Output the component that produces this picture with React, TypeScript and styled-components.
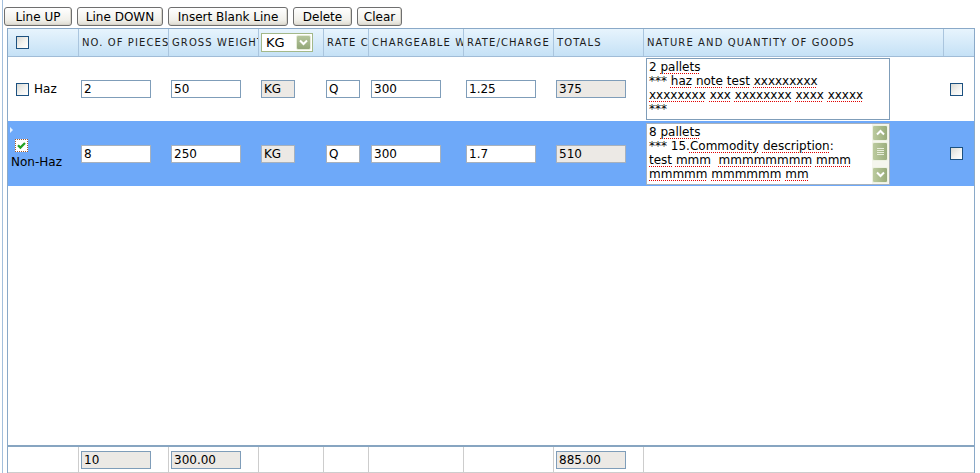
import React from 'react';
import styled, { createGlobalStyle } from 'styled-components';

const GlobalStyle = createGlobalStyle`
  html, body {
    margin: 0;
    padding: 0;
    background: #fff;
  }
  body {
    font-family: "DejaVu Sans", Verdana, sans-serif;
    font-size: 12px;
    color: #000;
  }
  * {
    box-sizing: border-box;
  }
`;

const COLS = '71px 90px 90px 65px 45px 95px 90px 90px 300px 30px';
const FOOT_COLS = '71px 90px 90px 65px 45px 95px 90px 90px 330px';

const Frame = styled.div`
  margin-left: 2px;
  border-left: 1px solid #a3bfdc;
  height: 473px;
  overflow: hidden;
`;

const Toolbar = styled.div`
  display: flex;
  gap: 5px;
  height: 28px;
  padding: 7px 0 0 1px;
`;

const Button = styled.button<{ $w: number }>`
  width: ${p => p.$w}px;
  height: 19px;
  padding: 0;
  border: 1px solid #6f6f6f;
  border-radius: 3px;
  background: linear-gradient(#ffffff, #f1f0ea 70%, #dedbd1);
  box-shadow: inset -1px -1px 0 #d8d5cb;
  font-family: "DejaVu Sans", Verdana, sans-serif;
  font-size: 12px;
  color: #000;
`;

const Grid = styled.div`
  margin-left: 4px;
  width: 968px;
  height: 445px;
  border: 1px solid #8aa9c8;
  border-bottom: none;
  display: flex;
  flex-direction: column;
`;

const HeadRow = styled.div`
  display: grid;
  grid-template-columns: ${COLS};
  height: 28px;
  flex-shrink: 0;
  border-bottom: 1px solid #a0bcd7;
  background: linear-gradient(#e7f4fd, #c5e1f6);
`;

const HeadCell = styled.div<{ $pad?: number }>`
  display: flex;
  align-items: center;
  padding-left: ${p => p.$pad ?? 3}px;
  border-right: 1px solid #aac5de;
  overflow: hidden;
  white-space: nowrap;
  font-size: 10px;
  letter-spacing: 1.1px;
  color: #1c1c1c;

  &:last-child {
    border-right: none;
  }
`;

const Body = styled.div`
  flex: 1;
  background: #fff;
`;

const Row = styled.div<{ $sel?: boolean; $h: number }>`
  display: grid;
  grid-template-columns: ${COLS};
  height: ${p => p.$h}px;
  background: ${p => (p.$sel ? '#6ea9f9' : '#fff')};
`;

const Cell = styled.div<{ $pad?: number }>`
  display: flex;
  align-items: center;
  min-width: 0;
  padding-left: ${p => p.$pad ?? 2}px;
`;

const LeadCell = styled.div`
  position: relative;
  display: flex;
  flex-wrap: wrap;
  align-items: center;
  align-content: center;
  row-gap: 3px;
  padding-left: 3px;
  font-size: 12px;
  line-height: 14px;
`;

const RowMark = styled.span`
  position: absolute;
  left: 2px;
  top: 6px;
  width: 0;
  height: 0;
  border-left: 3px solid #e4f1ff;
  border-top: 3px solid transparent;
  border-bottom: 3px solid transparent;
`;

const Box = styled.span<{ $ml?: number; $focus?: boolean }>`
  display: inline-flex;
  align-items: center;
  justify-content: center;
  width: 13px;
  height: 13px;
  margin: 0 5px 0 ${p => p.$ml ?? 0}px;
  flex-shrink: 0;
  border: 1px ${p => (p.$focus ? 'dotted #a25a30' : 'solid #1c5180')};
  background: ${p =>
    p.$focus ? '#fff' : 'linear-gradient(135deg, #d9d9d3 0%, #f3f3f0 55%, #ffffff 100%)'};
`;

const Input = styled.input<{ $w: number; $ro?: boolean; $sel?: boolean }>`
  width: ${p => p.$w}px;
  height: 18px;
  padding: 0 2px;
  border: 1px solid ${p => (p.$sel ? '#a7b1bd' : '#7f9db9')};
  background: ${p => (p.$ro ? '#ece9e5' : '#fff')};
  font-family: "DejaVu Sans", Verdana, sans-serif;
  font-size: 12px;
  color: #000;
  outline: none;
`;

const TextBox = styled.div<{ $sel?: boolean }>`
  display: flex;
  width: 244px;
  height: 62px;
  border: 1px solid ${p => (p.$sel ? '#a7b1bd' : '#7f9db9')};
  background: #fff;
`;

const TextContent = styled.div`
  flex: 1;
  min-width: 0;
  overflow: hidden;
  padding: 1px 2px;
  font-size: 12px;
  line-height: 14px;
  white-space: pre-wrap;
  color: #000;
`;

const Spell = styled.span`
  text-decoration: underline dotted #e00000;
  text-decoration-thickness: 1px;
  text-underline-offset: 2px;
`;

const Scroll = styled.div`
  width: 17px;
  display: flex;
  flex-direction: column;
  padding: 1px 1px 1px 0;
  background: #f5f6ee;
`;

const ScrollBtn = styled.div`
  height: 16px;
  border: 1px solid #eef2e3;
  border-radius: 2px;
  background: linear-gradient(90deg, #bccb9f, #98ab79);
  display: flex;
  align-items: center;
  justify-content: center;
`;

const Thumb = styled.div`
  height: 19px;
  margin-top: 1px;
  border: 1px solid #eef2e3;
  border-radius: 2px;
  background: linear-gradient(90deg, #bccb9f, #9cae7e);
  display: flex;
  flex-direction: column;
  align-items: center;
  justify-content: center;
  gap: 1px;

  span {
    width: 7px;
    height: 1px;
    background: #e8eedb;
  }
`;

const Track = styled.div`
  flex: 1;
`;

const Select = styled.div`
  width: 52px;
  height: 19px;
  border: 1px solid #a3b889;
  background: #fff;
  display: flex;
  align-items: center;
  justify-content: space-between;
  padding-left: 4px;
  font-size: 13px;
  letter-spacing: 0;
  color: #000;
`;

const SelectBtn = styled.span`
  width: 15px;
  height: 15px;
  margin-right: 1px;
  border: 1px solid #e5ecd8;
  border-radius: 2px;
  background: linear-gradient(#b5c59c, #93a778);
  display: flex;
  align-items: center;
  justify-content: center;
`;

const FootRow = styled.div`
  display: grid;
  grid-template-columns: ${FOOT_COLS};
  height: 28px;
  flex-shrink: 0;
  border-top: 2px solid #87a5c1;
`;

const FootCell = styled.div`
  padding: 4px 0 0 2px;
  border-right: 1px solid #cdcdcd;
  border-bottom: 1px solid #cdcdcd;

  &:last-child {
    border-right: none;
  }
`;

const Chevron = ({ up }: { up?: boolean }) => (
  <svg width="9" height="7" viewBox="0 0 9 7">
    <polyline
      points={up ? '1,5.5 4.5,2 8,5.5' : '1,1.5 4.5,5 8,1.5'}
      fill="none"
      stroke="#fff"
      strokeWidth="2"
    />
  </svg>
);

const Tick = () => (
  <svg width="9" height="9" viewBox="0 0 9 9">
    <polyline points="1,4.2 3.4,6.6 8,2" fill="none" stroke="#21a121" strokeWidth="2.2" />
  </svg>
);

function App() {
  return (
    <>
      <GlobalStyle />
      <Frame>
        <Toolbar>
          <Button $w={68}>Line UP</Button>
          <Button $w={86}>Line DOWN</Button>
          <Button $w={120}>Insert Blank Line</Button>
          <Button $w={59}>Delete</Button>
          <Button $w={45}>Clear</Button>
        </Toolbar>

        <Grid>
          <HeadRow>
            <HeadCell $pad={8}>
              <Box />
            </HeadCell>
            <HeadCell>NO. OF PIECES</HeadCell>
            <HeadCell>GROSS WEIGHT</HeadCell>
            <HeadCell $pad={2}>
              <Select>
                KG
                <SelectBtn>
                  <Chevron />
                </SelectBtn>
              </Select>
            </HeadCell>
            <HeadCell>RATE CLASS</HeadCell>
            <HeadCell>CHARGEABLE WEIGHT</HeadCell>
            <HeadCell>RATE/CHARGE</HeadCell>
            <HeadCell>TOTALS</HeadCell>
            <HeadCell>NATURE AND QUANTITY OF GOODS</HeadCell>
            <HeadCell />
          </HeadRow>

          <Body>
            <Row $h={64}>
              <LeadCell>
                <Box $ml={5} />
                Haz
              </LeadCell>
              <Cell><Input $w={70} readOnly value="2" /></Cell>
              <Cell><Input $w={70} readOnly value="50" /></Cell>
              <Cell><Input $w={34} $ro readOnly value="KG" /></Cell>
              <Cell><Input $w={34} readOnly value="Q" /></Cell>
              <Cell><Input $w={70} readOnly value="300" /></Cell>
              <Cell><Input $w={70} readOnly value="1.25" /></Cell>
              <Cell><Input $w={70} $ro readOnly value="375" /></Cell>
              <Cell>
                <TextBox>
                  <TextContent>
                    2 <Spell>pallets</Spell>
                    {'\n*** '}
                    <Spell>haz</Spell> <Spell>note</Spell> <Spell>test</Spell>{' '}
                    <Spell>xxxxxxxxx</Spell>
                    {'\n'}
                    <Spell>xxxxxxxx</Spell> <Spell>xxx</Spell> <Spell>xxxxxxxx</Spell>{' '}
                    <Spell>xxxx</Spell> <Spell>xxxxx</Spell>
                    {'\n***'}
                  </TextContent>
                </TextBox>
              </Cell>
              <Cell $pad={6}><Box /></Cell>
            </Row>

            <Row $h={65} $sel>
              <LeadCell>
                <RowMark />
                <Box $ml={4} $focus>
                  <Tick />
                </Box>
                Non-Haz
              </LeadCell>
              <Cell><Input $w={70} $sel readOnly value="8" /></Cell>
              <Cell><Input $w={70} $sel readOnly value="250" /></Cell>
              <Cell><Input $w={34} $sel $ro readOnly value="KG" /></Cell>
              <Cell><Input $w={34} $sel readOnly value="Q" /></Cell>
              <Cell><Input $w={70} $sel readOnly value="300" /></Cell>
              <Cell><Input $w={70} $sel readOnly value="1.7" /></Cell>
              <Cell><Input $w={70} $sel $ro readOnly value="510" /></Cell>
              <Cell>
                <TextBox $sel>
                  <TextContent>
                    8 <Spell>pallets</Spell>
                    {'\n*** 15.'}
                    <Spell>Commodity</Spell> <Spell>description</Spell>:
                    {'\n'}
                    <Spell>test</Spell> <Spell>mmm</Spell>{'  '}<Spell>mmmmmmmm</Spell>{' '}
                    <Spell>mmm</Spell>
                    {'\n'}
                    <Spell>mmmmm</Spell> <Spell>mmmmmm</Spell> <Spell>mm</Spell>{' '}
                    <Spell>mmmmmm</Spell>
                    {'\n'}
                    <Spell>mmmmmmm</Spell> <Spell>mmmm</Spell>
                  </TextContent>
                  <Scroll>
                    <ScrollBtn><Chevron up /></ScrollBtn>
                    <Thumb>
                      <span />
                      <span />
                      <span />
                      <span />
                    </Thumb>
                    <Track />
                    <ScrollBtn><Chevron /></ScrollBtn>
                  </Scroll>
                </TextBox>
              </Cell>
              <Cell $pad={6}><Box /></Cell>
            </Row>
          </Body>

          <FootRow>
            <FootCell />
            <FootCell><Input $w={70} $ro readOnly value="10" /></FootCell>
            <FootCell><Input $w={70} $ro readOnly value="300.00" /></FootCell>
            <FootCell />
            <FootCell />
            <FootCell />
            <FootCell />
            <FootCell><Input $w={70} $ro readOnly value="885.00" /></FootCell>
            <FootCell />
          </FootRow>
        </Grid>
      </Frame>
    </>
  );
}

export default App;
